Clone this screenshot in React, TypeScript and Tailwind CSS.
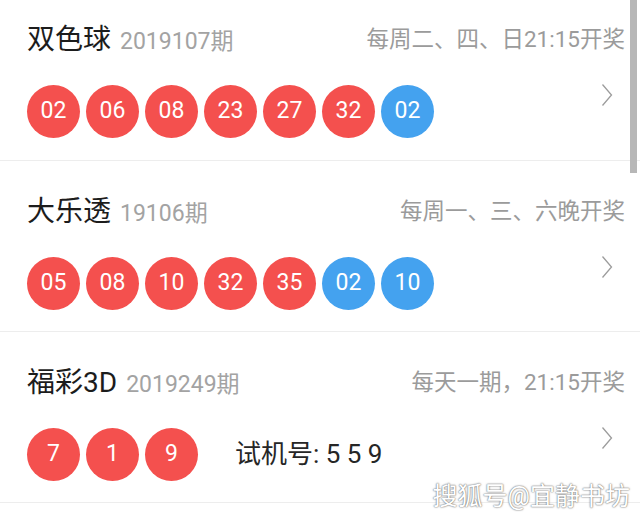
type Ball = { n: string; blue?: boolean };

interface Draw {
  name: string;
  issue: string;
  schedule: string;
  balls: Ball[];
  trial?: string;
}

const draws: Draw[] = [
  {
    name: '双色球',
    issue: '2019107期',
    schedule: '每周二、四、日21:15开奖',
    balls: [
      { n: '02' }, { n: '06' }, { n: '08' }, { n: '23' }, { n: '27' }, { n: '32' }, { n: '02', blue: true },
    ],
  },
  {
    name: '大乐透',
    issue: '19106期',
    schedule: '每周一、三、六晚开奖',
    balls: [
      { n: '05' }, { n: '08' }, { n: '10' }, { n: '32' }, { n: '35' }, { n: '02', blue: true }, { n: '10', blue: true },
    ],
  },
  {
    name: '福彩3D',
    issue: '2019249期',
    schedule: '每天一期，21:15开奖',
    balls: [{ n: '7' }, { n: '1' }, { n: '9' }],
    trial: '5 5 9',
  },
];

function Chevron() {
  return (
    <svg width="12" height="24" viewBox="0 0 12 24" className="shrink-0">
      <polyline points="1.5,1.5 10.5,12 1.5,22.5" fill="none" stroke="#9c9c9c" strokeWidth="1.3" />
    </svg>
  );
}

function DrawRow({ draw, first }: { draw: Draw; first?: boolean }) {
  return (
    <div
      className={`flex flex-col border-b border-[#ededed] pl-[27px] ${first ? 'h-[161px] pt-[24px]' : 'h-[171px] pt-[35px]'}`}
    >
      <div className="flex h-[32px] items-center pr-[15px]">
        <div className="flex items-baseline gap-[9px]">
          <span className="text-[28px] text-[#1c1c1c]">{draw.name}</span>
          <span className="text-[23px] text-[#a3a3a3]">{draw.issue}</span>
        </div>
        <span className="ml-auto text-[22.5px] text-[#9b9b9b]">{draw.schedule}</span>
      </div>
      <div className="mt-[29px] flex items-start pr-[27px]">
        <div className="flex items-center gap-[6px]">
          {draw.balls.map((b, i) => (
            <div
              key={i}
              className={`flex h-[53px] w-[53px] items-center justify-center rounded-full text-[23px] text-white ${b.blue ? 'bg-[#44a2ef]' : 'bg-[#f4504e]'}`}
            >
              {b.n}
            </div>
          ))}
          {draw.trial && (
            <span className="ml-[31px] text-[26px] text-[#262626]">试机号: {draw.trial}</span>
          )}
        </div>
        <div className="ml-auto -mt-[2px]">
          <Chevron />
        </div>
      </div>
    </div>
  );
}

export default function App() {
  return (
    <div
      className="relative h-[516px] w-[640px] overflow-hidden bg-white"
      style={{ fontFamily: 'Roboto, "Noto Sans CJK SC", sans-serif' }}
    >
      {draws.map((d, i) => (
        <DrawRow key={d.name} draw={d} first={i === 0} />
      ))}
      <div className="absolute right-[3px] top-0 h-[173px] w-[7px] bg-[#b7b7b7]" />
      <div className="absolute right-[10px] top-[478px] text-[25px] text-white [text-shadow:0_0_2px_#666,0_0_1px_#888]">
        搜狐号@宜静书坊
      </div>
    </div>
  );
}
